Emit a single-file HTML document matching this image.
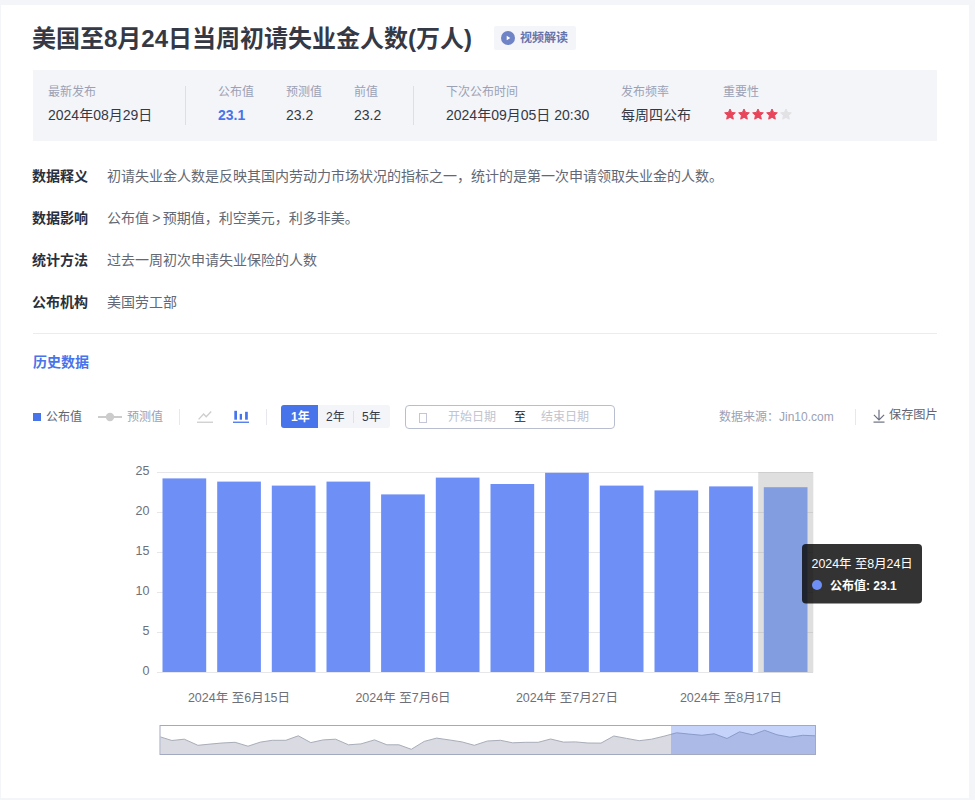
<!DOCTYPE html>
<html lang="zh-CN">
<head>
<meta charset="utf-8">
<title>美国至8月24日当周初请失业金人数(万人)</title>
<style>
*{box-sizing:border-box;margin:0;padding:0}
html,body{width:975px;height:800px;overflow:hidden}
body{background:#f4f5f9;font-family:"Liberation Sans","Noto Sans CJK SC",sans-serif;color:#2b2f3a;position:relative}
.card{position:absolute;left:1px;top:5px;width:968px;height:793px;background:#fff}
.abs{position:absolute;white-space:nowrap}
h1{position:absolute;left:32px;top:23px;font-size:24px;line-height:32px;font-weight:bold;color:#353945;white-space:nowrap}
.vbtn{position:absolute;left:494px;top:26px;width:82px;height:24px;background:#f4f5f9;border-radius:2px;font-size:12px;font-weight:bold;color:#6474ad;line-height:24px}
.vbtn svg{position:absolute;left:7px;top:5px}
.vbtn span{position:absolute;left:26px;top:0}
.info{position:absolute;left:33px;top:70px;width:904px;height:71px;background:#f4f5f9}
.info .l{position:absolute;top:14px;font-size:12px;line-height:16px;color:#9ba1b5;white-space:nowrap}
.info .v{position:absolute;top:35px;font-size:14px;line-height:20px;color:#353945;white-space:nowrap}
.info .sep{position:absolute;top:16px;width:1px;height:39px;background:#dddfe6}
.row{position:absolute;left:33px;font-size:14px;line-height:20px;white-space:nowrap}
.row b{position:absolute;left:-1px;top:0;color:#2b2f3a;font-weight:bold}
.row span{position:absolute;left:74px;top:0;color:#636875}
.hr{position:absolute;left:33px;top:333px;width:904px;height:1px;background:#ececee}
.hist{position:absolute;left:33px;top:352px;font-size:14px;line-height:20px;font-weight:bold;color:#4774eb}
.tb{position:absolute;font-size:12px;line-height:18px;white-space:nowrap}
</style>
</head>
<body>
<div class="card"></div>
<h1>美国至8月24日当周初请失业金人数(万人)</h1>
<div class="vbtn"><svg width="14" height="14" viewBox="0 0 14 14"><circle cx="7" cy="7" r="7" fill="#6f83c7"/><path d="M5.7 4.7 L9.3 7 L5.7 9.3 Z" fill="#fff"/></svg><span>视频解读</span></div>

<div class="info">
  <div class="l" style="left:15px">最新发布</div><div class="v" style="left:15px">2024年08月29日</div>
  <div class="sep" style="left:152px"></div>
  <div class="l" style="left:185px">公布值</div><div class="v" style="left:185px;color:#4774eb;font-weight:bold">23.1</div>
  <div class="l" style="left:253px">预测值</div><div class="v" style="left:253px">23.2</div>
  <div class="l" style="left:321px">前值</div><div class="v" style="left:321px">23.2</div>
  <div class="sep" style="left:380px"></div>
  <div class="l" style="left:413px">下次公布时间</div><div class="v" style="left:413px">2024年09月05日 20:30</div>
  <div class="l" style="left:588px">发布频率</div><div class="v" style="left:588px">每周四公布</div>
  <div class="l" style="left:690px">重要性</div>
  <svg class="abs" style="left:690px;top:37px" width="72" height="15" viewBox="0 0 72 15">
    <path id="s1" d="M7.00 2.00 L8.59 5.42 L12.33 5.87 L9.57 8.43 L10.29 12.13 L7.00 10.30 L3.71 12.13 L4.43 8.43 L1.67 5.87 L5.41 5.42 Z" fill="#e8445a" stroke="#e8445a" stroke-width="1" stroke-linejoin="round"/>
    <use href="#s1" x="14"/><use href="#s1" x="28"/><use href="#s1" x="42"/>
    <path d="M63.00 2.00 L64.59 5.42 L68.33 5.87 L65.57 8.43 L66.29 12.13 L63.00 10.30 L59.71 12.13 L60.43 8.43 L57.67 5.87 L61.41 5.42 Z" fill="#e2e2e5" stroke="#e2e2e5" stroke-width="1" stroke-linejoin="round"/>
  </svg>
</div>

<div class="row" style="top:166px"><b>数据释义</b><span>初请失业金人数是反映其国内劳动力市场状况的指标之一，统计的是第一次申请领取失业金的人数。</span></div>
<div class="row" style="top:208px"><b>数据影响</b><span>公布值<i style="font-style:normal;letter-spacing:-0.7px"> &gt; </i>预期值，利空美元，利多非美。</span></div>
<div class="row" style="top:250px"><b>统计方法</b><span>过去一周初次申请失业保险的人数</span></div>
<div class="row" style="top:292px"><b>公布机构</b><span>美国劳工部</span></div>
<div class="hr"></div>
<div class="hist">历史数据</div>

<!-- toolbar -->
<div class="abs" style="left:33px;top:413px;width:8px;height:8px;background:#4774eb"></div>
<div class="tb" style="left:46px;top:408px;color:#606574">公布值</div>
<svg class="abs" style="left:98px;top:411px" width="24" height="12" viewBox="0 0 24 12"><line x1="0" y1="6" x2="24" y2="6" stroke="#ccc" stroke-width="2"/><circle cx="12" cy="6" r="4.2" fill="#ccc"/></svg>
<div class="tb" style="left:127px;top:408px;color:#9ba1b5">预测值</div>
<div class="abs" style="left:179px;top:409px;width:1px;height:16px;background:#e6e8ee"></div>
<svg class="abs" style="left:197px;top:408px" width="16" height="16" viewBox="0 0 16 16"><path d="M1.6 11.4 L6.6 6 L9.2 8.7 L14.2 3.5" fill="none" stroke="#cdcdd0" stroke-width="1.3"/><line x1="0" y1="14.25" x2="16" y2="14.25" stroke="#cdcdd0" stroke-width="1.3"/></svg>
<svg class="abs" style="left:233px;top:408px" width="16" height="16" viewBox="0 0 16 16"><rect x="1.3" y="2.8" width="2.7" height="8.900" fill="#4774eb"/><rect x="6.7" y="5.900" width="2.3" height="5.800" fill="#4774eb"/><rect x="12.1" y="3.800" width="2.7" height="7.900" fill="#4774eb"/><rect x="0" y="13.6" width="16" height="1.3" fill="#4774eb"/></svg>
<div class="abs" style="left:266px;top:409px;width:1px;height:16px;background:#e6e8ee"></div>
<div class="abs" style="left:281px;top:405px;width:109px;height:23px;background:#f4f5f9;border-radius:3px"></div>
<div class="abs" style="left:281px;top:405px;width:37px;height:23px;background:#4774eb;border-radius:3px 0 0 3px"></div>
<div class="tb" style="left:291px;top:408px;color:#fff;font-weight:bold">1年</div>
<div class="tb" style="left:326px;top:408px;color:#353945">2年</div>
<div class="abs" style="left:353px;top:411px;width:1px;height:12px;background:#dfe1e8"></div>
<div class="tb" style="left:362px;top:408px;color:#353945">5年</div>
<div class="abs" style="left:405px;top:405px;width:210px;height:24px;border:1px solid #b9bdd0;border-radius:4px;background:#fff"></div>
<div class="abs" style="left:419px;top:413px;width:8px;height:10px;border:1px solid #c2c6d8"></div>
<div class="tb" style="left:448px;top:408px;color:#c0c4cf">开始日期</div>
<div class="tb" style="left:514px;top:408px;color:#1a1a1a">至</div>
<div class="tb" style="left:541px;top:408px;color:#c0c4cf">结束日期</div>
<div class="tb" style="left:719px;top:408px;font-size:12px;color:#9ba1b5">数据来源：Jin10.com</div>
<div class="abs" style="left:855px;top:409px;width:1px;height:16px;background:#e6e8ee"></div>
<svg class="abs" style="left:872px;top:409px" width="14" height="15" viewBox="0 0 14 15"><path d="M7 0.7 V11 M1.9 5.900 L7 11 L12.1 5.900" fill="none" stroke="#6b7080" stroke-width="1.2"/><line x1="1.5" y1="13.1" x2="12.5" y2="13.1" stroke="#6b7080" stroke-width="1.2"/></svg>
<div class="tb" style="left:889px;top:406px;color:#606574;font-size:12.2px">保存图片</div>

<!-- chart -->
<svg class="abs" style="left:0;top:440px" width="975" height="340" viewBox="0 440 975 340" font-family='"Liberation Sans","Noto Sans CJK SC",sans-serif'>
  <g stroke="#e7e7ea" stroke-width="1" shape-rendering="crispEdges">
    <line x1="157" y1="472.5" x2="813" y2="472.5"/><line x1="157" y1="512.5" x2="813" y2="512.5"/><line x1="157" y1="552.5" x2="813" y2="552.5"/><line x1="157" y1="592.5" x2="813" y2="592.5"/><line x1="157" y1="632.5" x2="813" y2="632.5"/><line x1="157" y1="672.5" x2="813" y2="672.5"/>
  </g>
  <rect x="758.2" y="472" width="55.1" height="200.500" fill="#969696" fill-opacity="0.3"/>
  <g fill="#6e8ff5">
    <rect x="162.5" y="478.4" width="43.7" height="193.6"/>
    <rect x="217.2" y="481.6" width="43.7" height="190.4"/>
    <rect x="271.8" y="485.6" width="43.7" height="186.4"/>
    <rect x="326.5" y="481.6" width="43.7" height="190.4"/>
    <rect x="381.1" y="494.4" width="43.7" height="177.6"/>
    <rect x="435.8" y="477.6" width="43.7" height="194.4"/>
    <rect x="490.5" y="484.0" width="43.7" height="188.0"/>
    <rect x="545.1" y="472.8" width="43.7" height="199.2"/>
    <rect x="599.8" y="485.6" width="43.7" height="186.4"/>
    <rect x="654.5" y="490.4" width="43.7" height="181.6"/>
    <rect x="709.1" y="486.4" width="43.7" height="185.6"/>
    <rect x="763.8" y="487.2" width="43.7" height="184.8" fill="#839ee0"/>
  </g>
  <g font-size="12.5" fill="#6e7079" text-anchor="end">
    <text x="149.500" y="475.0">25</text><text x="149.500" y="515.0">20</text><text x="149.500" y="555.0">15</text><text x="149.500" y="595.0">10</text><text x="149.500" y="635.0">5</text><text x="149.500" y="675.0">0</text>
  </g>
  <g font-size="12.5" fill="#6e7079" text-anchor="middle">
    <text x="239" y="701.5">2024年 至6月15日</text><text x="403" y="701.5">2024年 至7月6日</text><text x="567" y="701.5">2024年 至7月27日</text><text x="731" y="701.5">2024年 至8月17日</text>
  </g>
  <!-- data zoom -->
  <path d="M160.4 736.9 L171.9 740.5 L184.3 739.2 L197.9 745.3 L210.0 744.1 L222.0 743.0 L235.1 742.3 L248.0 746.2 L260.4 742.1 L272.4 740.3 L285.9 740.3 L298.3 735.8 L310.8 742.6 L323.2 739.9 L335.6 739.2 L348.5 744.8 L360.9 743.9 L374.5 739.9 L386.9 744.8 L398.9 744.8 L411.3 749.3 L424.2 741.4 L436.6 738.1 L449.0 739.9 L461.9 741.9 L474.3 745.3 L487.4 741.0 L500.5 740.3 L512.7 742.8 L525.8 742.3 L538.2 742.3 L550.6 739.0 L563.5 742.1 L575.4 741.9 L588.0 743.0 L601.0 743.1 L613.8 736.0 L626.5 738.4 L639.2 740.7 L651.5 739.2 L664.0 736.2 L676.6 732.8 L688.4 734.0 L701.9 735.3 L714.2 733.8 L727.0 738.5 L739.6 731.8 L752.4 734.8 L764.7 730.3 L777.0 734.8 L790.0 737.2 L802.8 735.3 L815.0 735.8 L815 754.5 L160.4 754.5 Z" fill="#d9dae2"/>
  <path d="M160.4 736.9 L171.9 740.5 L184.3 739.2 L197.9 745.3 L210.0 744.1 L222.0 743.0 L235.1 742.3 L248.0 746.2 L260.4 742.1 L272.4 740.3 L285.9 740.3 L298.3 735.8 L310.8 742.6 L323.2 739.9 L335.6 739.2 L348.5 744.8 L360.9 743.9 L374.5 739.9 L386.9 744.8 L398.9 744.8 L411.3 749.3 L424.2 741.4 L436.6 738.1 L449.0 739.9 L461.9 741.9 L474.3 745.3 L487.4 741.0 L500.5 740.3 L512.7 742.8 L525.8 742.3 L538.2 742.3 L550.6 739.0 L563.5 742.1 L575.4 741.9 L588.0 743.0 L601.0 743.1 L613.8 736.0 L626.5 738.4 L639.2 740.7 L651.5 739.2 L664.0 736.2 L676.6 732.8 L688.4 734.0 L701.9 735.3 L714.2 733.8 L727.0 738.5 L739.6 731.8 L752.4 734.8 L764.7 730.3 L777.0 734.8 L790.0 737.2 L802.8 735.3 L815.0 735.8" fill="none" stroke="#a8adb8" stroke-width="1"/>
  <rect x="671" y="725.5" width="144.5" height="29" fill="#4a76f0" fill-opacity="0.32"/>
  <rect x="160" y="725.5" width="655.500" height="29" fill="none" stroke="#a4a9c2" stroke-width="1"/>
  <!-- tooltip -->
  <rect x="802" y="544" width="120" height="59.500" rx="4" fill="#0c0c0c" fill-opacity="0.84"/>
  <circle cx="817" cy="585" r="5" fill="#6e8ff5"/>
  <g font-size="12" fill="#fff">
    <text x="811.500" y="568" font-size="12.4">2024年 至8月24日</text>
    <text x="830" y="590" font-weight="bold">公布值: 23.1</text>
  </g>
</svg>
</body>
</html>
